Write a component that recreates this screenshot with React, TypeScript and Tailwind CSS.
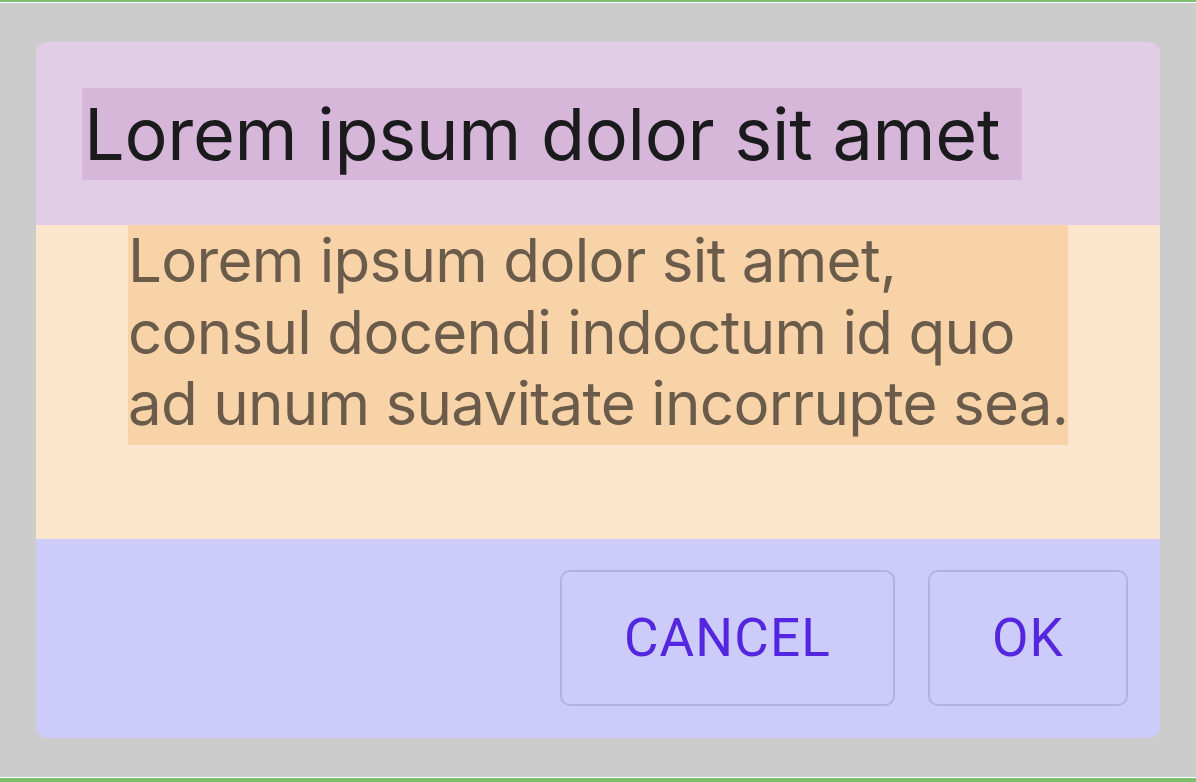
import React from "react";

export default function App() {
  return (
    <div className="w-[1196px] h-[782px] bg-[#7dbf6e] pt-[2px] pb-[4px] overflow-hidden">
      <div className="h-full border-t border-b border-white bg-[#cccccc] pt-[39px] px-[36px]">
        <div className="w-[1124px] h-[696px] rounded-[12px] overflow-hidden flex flex-col">
          <div className="h-[183px] bg-[#e1cde6] pt-[46px] pl-[46px]">
            <div
              className="w-[940px] h-[92px] bg-[#d6b7da] text-[#1b1a1c] text-[72px] leading-[92px] pl-[2px] tracking-[-0.3px] whitespace-nowrap"
              style={{ fontFamily: "Inter, 'Noto Sans', sans-serif" }}
            >
              Lorem ipsum dolor sit amet
            </div>
          </div>
          <div className="h-[314px] bg-[#fbe6cd] pl-[92px]">
            <div
              className="w-[940px] h-[220px] bg-[#f9d3a8] text-[#6a5b4b] text-[60px] leading-[71.5px] tracking-[-0.7px] whitespace-nowrap"
              style={{ fontFamily: "Inter, 'Noto Sans', sans-serif" }}
            >
              <div>Lorem ipsum dolor sit amet,</div>
              <div>consul docendi indoctum id quo</div>
              <div>ad unum suavitate incorrupte sea.</div>
            </div>
          </div>
          <div className="flex-1 bg-[#cccbf9] flex justify-end items-start pt-[31px] pr-[32px] gap-[33px]">
            <button
              className="w-[335px] h-[136px] rounded-[10px] border-2 border-[#b3b2dc] text-[#5426e0] text-[53px] font-normal tracking-[1.2px] pt-[2px]"
              style={{ fontFamily: "Roboto, sans-serif" }}
            >
              CANCEL
            </button>
            <button
              className="w-[200px] h-[136px] rounded-[10px] border-2 border-[#b3b2dc] text-[#5426e0] text-[53px] font-normal tracking-[1.2px] pt-[2px]"
              style={{ fontFamily: "Roboto, sans-serif" }}
            >
              OK
            </button>
          </div>
        </div>
      </div>
    </div>
  );
}
